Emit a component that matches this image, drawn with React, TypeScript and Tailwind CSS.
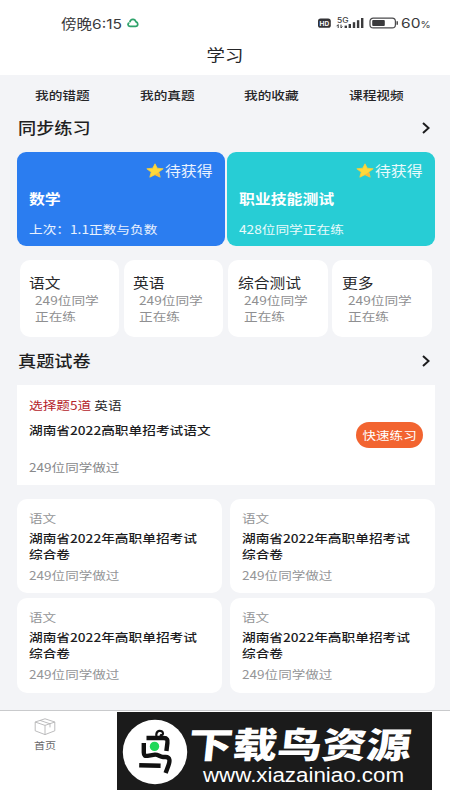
import React from "react";

type TextProps = { children: React.ReactNode; className?: string };

// Wide-set text line: glyphs are drawn slightly broader than tall.
function T({ children, className = "" }: TextProps) {
  return (
    <div className={`w-max origin-left scale-x-[1.15] whitespace-nowrap ${className}`}>{children}</div>
  );
}

function Star() {
  return (
    <svg width="18" height="15" viewBox="0 0 18 15" preserveAspectRatio="none">
      <path
        d="M9 .8 11.3 5.2 17.2 5.8 12.8 9.1 14.2 14.2 9 11.7 3.8 14.2 5.2 9.1 .8 5.8 6.7 5.2Z"
        fill="#ffd93a"
        stroke="#f9cf3a"
        strokeWidth=".8"
        strokeLinejoin="round"
      />
      <path d="M12.8 9.1 14.2 14.2 9 11.7Z" fill="#f5a93a" opacity=".6" />
    </svg>
  );
}

function Chevron() {
  return (
    <svg width="8" height="12" viewBox="0 0 8 12" fill="none" stroke="#1b1b1d" strokeWidth="2">
      <path d="M1 1 6.6 6 1 11" />
    </svg>
  );
}

function StatusBar() {
  return (
    <div className="flex h-[46px] items-center text-[#3a3a3c]">
      <div className="ml-[61px] w-[64px] text-[13.5px] leading-[46px]">
        <T>
          傍晚<span className="font-['Inter'] text-[13.5px]">6:15</span>
        </T>
      </div>
      <svg className="ml-[2px]" width="12" height="10" viewBox="0 0 12 10" fill="none" stroke="#2fa36b" strokeWidth="1.7">
        <path d="M2.8 4.2C3.6 .6 8 .4 8.8 3.6 11.6 4.6 11.2 8.3 8.6 8.3H4.2M6.4 8.3H3C.4 8 .5 5.2 2.4 4.8" />
      </svg>
      <svg className="ml-[179px]" width="80" height="14" viewBox="0 0 80 14">
        <rect x="0" y="2.6" width="12.8" height="9.2" rx="2.6" fill="#333336" />
        <text x="1.6" y="9.5" fontFamily="Inter" fontWeight="700" fontSize="6.2" textLength="9.6" lengthAdjust="spacingAndGlyphs" fill="#fff">HD</text>
        <text x="19" y="6.9" fontFamily="Inter" fontWeight="500" fontSize="7" textLength="11.5" lengthAdjust="spacingAndGlyphs" fill="#3a3a3c">5G</text>
        <path d="M20.2 12V8.6l-1.6 1.6M23 8.6V12l1.4-1.5" stroke="#3a3a3c" fill="none" />
        <g fill="#3a3a3c">
          <rect x="26.6" y="9.6" width="2.4" height="2.4" />
          <rect x="30.6" y="8" width="2.4" height="4" />
          <rect x="34.8" y="6.2" width="2.4" height="5.8" />
          <rect x="38.9" y="4.2" width="2.4" height="7.8" />
          <rect x="43" y="2" width="2.4" height="10" />
        </g>
        <rect x="52" y="2.1" width="25.4" height="9.8" rx="3.2" fill="none" stroke="#4a4a4c" strokeWidth="1.2" />
        <rect x="54.2" y="4" width="12.6" height="6" rx="1" fill="#3a3a3c" />
        <path d="M79.2 5.3v3.4" stroke="#3a3a3c" strokeWidth="1.4" />
      </svg>
      <div className="ml-[3px] font-['Inter'] text-[13.5px]">
        <T>
          60<span className="text-[9px]">%</span>
        </T>
      </div>
    </div>
  );
}

function SectionTitle({ title }: { title: string }) {
  return (
    <div className="flex h-6 items-center justify-between pr-[20px] pl-[18px] text-[15.8px] leading-6 font-medium text-[#1f1f22]">
      <T>{title}</T>
      <Chevron />
    </div>
  );
}

function CourseCard({ title, note, className }: { title: string; note: string; className: string }) {
  return (
    <div className={`h-[94px] w-[207.5px] rounded-[9px] pt-[7px] pl-[12px] ${className}`}>
      <div className="ml-[116.5px] flex h-[22px] items-center gap-[1px] text-[13.8px] leading-[22px] text-white/90">
        <Star />
        <T>待获得</T>
      </div>
      <T className="mt-[5.5px] text-[13.8px] leading-[22px] font-bold text-white">{title}</T>
      <T className="mt-[10.4px] text-[11.9px] leading-[20px] text-white/90">{note}</T>
    </div>
  );
}

function SubjectCard({ title }: { title: string }) {
  return (
    <div className="h-[76.5px] w-[99.5px] rounded-[10px] bg-white pt-[12px] pl-[9.5px]">
      <T className="text-[13.7px] leading-[20px] text-[#29292b]">{title}</T>
      <T className="ml-[6px] text-[11.9px] leading-[16px] text-[#8f8f91]">
        249位同学
        <br />
        正在练
      </T>
    </div>
  );
}

function PaperCard() {
  return (
    <div className="h-[94.5px] w-[204.5px] rounded-[10px] bg-white pt-[10px] pl-[12px]">
      <T className="text-[11.8px] leading-[17px] text-[#949597]">语文</T>
      <T className="mt-[4px] text-[11.9px] leading-[16px] font-medium text-[#1c1c1e]">
        湖南省2022年高职单招考试
        <br />
        综合卷
      </T>
      <T className="mt-[4.4px] text-[11.8px] leading-[18px] text-[#949597]">249位同学做过</T>
    </div>
  );
}

function BirdLogo() {
  return (
    <svg width="66" height="66" viewBox="0 0 66 66" className="shrink-0">
      <circle cx="33" cy="33" r="32.2" fill="#fff" />
      <g fill="none" stroke="#111" strokeWidth="4.4">
        <path d="M24.5 19H41.5C45.4 19 45.8 21 45.4 24L44.4 32" />
        <path d="M21.8 24V33.5C21.8 36.6 23 37.2 25.5 36.8L33 35.6C36 35.3 38 38 41 38H43.5C48.3 38.2 48 42 46.4 46.5L43.6 54" />
        <path d="M17.2 46.2 38.6 46.8" />
        <path d="M34.4 17.6c-1-7.2 6.2-7 6.6-3.2.1 1.6-1.8 2.2-3 1.2" strokeWidth="2.2" />
      </g>
      <circle cx="32.5" cy="27.4" r="4.7" fill="#20d85a" />
    </svg>
  );
}

export default function App() {
  return (
    <div className="flex h-[800px] w-[450px] flex-col overflow-hidden bg-white font-['Noto_Sans_CJK_SC','Noto_Sans',sans-serif]">
      <header className="h-[75px] shrink-0 bg-white">
        <StatusBar />
        <div className="-mt-[2px] flex h-[20px] justify-center text-[16px] leading-[20px] text-[#252527]">
          <div className="w-max scale-x-[1.15]">学习</div>
        </div>
      </header>
      <main className="h-[635px] shrink-0 bg-[#f3f4f7] pt-[10px]">
        <nav className="grid h-[20px] grid-cols-[104.4px_104.4px_104.4px_auto] pl-[35.4px] text-[11.9px] leading-[20px] font-medium text-[#252527]">
          <T>我的错题</T>
          <T>我的真题</T>
          <T>我的收藏</T>
          <T>课程视频</T>
        </nav>
        <div className="mt-[11px]">
          <SectionTitle title="同步练习" />
        </div>
        <div className="mt-[12px] flex gap-[2.5px] pl-[17px]">
          <CourseCard title="数学" note="上次：1.1正数与负数" className="bg-[#2b7df0]" />
          <CourseCard title="职业技能测试" note="428位同学正在练" className="bg-[#27cdd5]" />
        </div>
        <div className="mt-[14px] flex gap-[4.8px] pl-[19.5px]">
          <SubjectCard title="语文" />
          <SubjectCard title="英语" />
          <SubjectCard title="综合测试" />
          <SubjectCard title="更多" />
        </div>
        <div className="mt-[12.5px]">
          <SectionTitle title="真题试卷" />
        </div>
        <section className="mt-[12px] ml-[17px] flex h-[100px] w-[417.5px] items-center justify-between bg-white pr-[11.5px] pl-[12px]">
          <div className="pt-[2px]">
            <T className="text-[11.9px] leading-[18px] text-[#29292b]">
              <span className="text-[#b5232b]">选择题5道</span> 英语
            </T>
            <T className="mt-[7px] text-[11.9px] leading-[18px] font-medium text-[#1c1c1e]">湖南省2022高职单招考试语文</T>
            <T className="mt-[19px] text-[11.8px] leading-[18px] text-[#88898b]">249位同学做过</T>
          </div>
          <button className="flex h-[26px] w-[67px] items-center justify-center rounded-full bg-[#f26430] text-[11.8px] leading-[26px] text-white">
            <span className="block scale-x-[1.15] whitespace-nowrap">快速练习</span>
          </button>
        </section>
        <div className="mt-[13.5px] grid grid-cols-[204.5px_204.5px] gap-x-[8.5px] gap-y-[5px] pl-[17px]">
          <PaperCard />
          <PaperCard />
          <PaperCard />
          <PaperCard />
        </div>
      </main>
      <footer className="flex h-[90px] shrink-0 border-t border-[#c9cacc] bg-white">
        <div className="flex w-[117px] flex-col pt-[7px] pl-[34px]">
          <svg width="22" height="18" viewBox="0 0 22 18" fill="none" stroke="#b4b4b6" strokeWidth=".9" strokeLinejoin="round">
            <path d="M1.2 4 11 .8 20.8 4v8.8L11 16.6 1.2 12.8ZM1.2 4 11 7.4 20.8 4M11 7.4v9.2M6 2.4l10 3.4v3.6" />
          </svg>
          <T className="text-[9.6px] leading-[18px] text-[#69696b]">首页</T>
        </div>
        <div className="mt-px flex h-[78px] w-[315px] bg-[#1b1b1b] pt-[7px] pl-[5px] text-white">
          <BirdLogo />
          <svg width="240" height="70" viewBox="0 0 240 70" className="overflow-visible">
            <g transform="skewX(-6)">
              <text x="3" y="38.5" fontFamily="Noto Sans CJK SC" fontWeight="900" fontSize="35.5" textLength="223" lengthAdjust="spacingAndGlyphs" fill="#fff">下载鸟资源</text>
            </g>
            <text x="15" y="63.4" fontFamily="Liberation Sans" fontSize="20" textLength="201" lengthAdjust="spacingAndGlyphs" fill="#fff">www.xiazainiao.com</text>
          </svg>
        </div>
      </footer>
    </div>
  );
}
